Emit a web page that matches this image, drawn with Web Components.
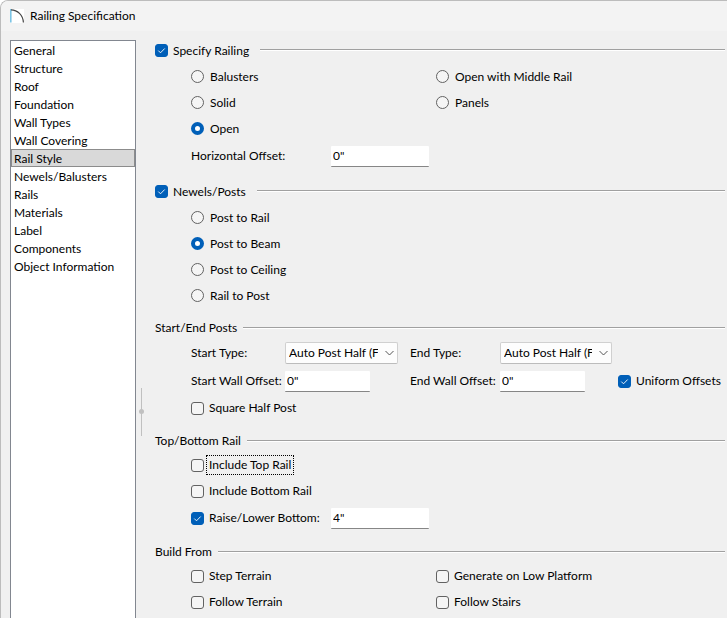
<!DOCTYPE html>
<html lang="en">
<head>
<meta charset="utf-8">
<title>Railing Specification</title>
<style>
html, body { margin: 0; height: 100%; }
body { font: 12px/18px Lato, "Open Sans", sans-serif; color: #000; background: #fff; overflow: hidden; }
</style>
</head>
<body>
<dialog-window heading="Railing Specification">
  <nav-list slot="nav" items="General|Structure|Roof|Foundation|Wall Types|Wall Covering|Rail Style|Newels/Balusters|Rails|Materials|Label|Components|Object Information" current="Rail Style"></nav-list>

  <option-group heading="Specify Railing" checkable>
    <radio-set label="Railing type" columns="2" options="Balusters|Open with Middle Rail|Solid|Panels|Open" selected="Open"></radio-set>
    <text-field label="Horizontal Offset:" value='0"'></text-field>
  </option-group>

  <option-group heading="Newels/Posts" checkable>
    <radio-set label="Post placement" columns="1" options="Post to Rail|Post to Beam|Post to Ceiling|Rail to Post" selected="Post to Beam"></radio-set>
  </option-group>

  <option-group heading="Start/End Posts">
    <field-row layout="posts">
      <select-field label="Start Type:" value="Auto Post Half (Flat)"></select-field>
      <select-field label="End Type:" value="Auto Post Half (Flat)" class="end"></select-field>
    </field-row>
    <field-row layout="posts">
      <text-field label="Start Wall Offset:" value='0"' class="compact start narrow"></text-field>
      <text-field label="End Wall Offset:" value='0"' class="compact end narrow"></text-field>
      <check-box label="Uniform Offsets" checked></check-box>
    </field-row>
    <check-box label="Square Half Post"></check-box>
  </option-group>

  <option-group heading="Top/Bottom Rail">
    <check-box label="Include Top Rail" focused></check-box>
    <check-box label="Include Bottom Rail"></check-box>
    <field-row layout="raise">
      <check-box label="Raise/Lower Bottom:" checked></check-box>
      <text-field name="Raise/Lower Bottom" value='4"' class="compact"></text-field>
    </field-row>
  </option-group>

  <option-group heading="Build From">
    <field-row layout="pair">
      <check-box label="Step Terrain"></check-box>
      <check-box label="Generate on Low Platform"></check-box>
    </field-row>
    <field-row layout="pair">
      <check-box label="Follow Terrain"></check-box>
      <check-box label="Follow Stairs"></check-box>
    </field-row>
  </option-group>
</dialog-window>

<script>
const esc = s => (s || '').replace(/&/g, '&amp;').replace(/"/g, '&quot;').replace(/</g, '&lt;');

class Base extends HTMLElement {
  connectedCallback() {
    if (!this.shadowRoot) this.attachShadow({ mode: 'open' }).innerHTML = this.render();
  }
  a(name) { return esc(this.getAttribute(name)); }
}

const toggleCss = `
  input { appearance: none; box-sizing: border-box; flex: none; width: 13px; height: 13px; margin: 0;
    border: 1px solid #626262; background: #f5f5f5; outline: none; }
  input[type=checkbox] { border-radius: 3px; }
  input[type=radio] { border-radius: 50%; }
  input[type=checkbox]:checked { border-color: #005fb8; background: #005fb8
    url("data:image/svg+xml,%3Csvg xmlns='http://www.w3.org/2000/svg' viewBox='0 0 11 11'%3E%3Cpath d='M2.3 5.6 4.5 7.8 8.7 3.5' fill='none' stroke='white' stroke-width='.9'/%3E%3C/svg%3E") center / 11px 11px; }
  input[type=radio]:checked { border: 4px solid #005fb8; background: #fff; }
`;

customElements.define('dialog-window', class extends Base {
  render() {
    return `<style>
      :host { display: flex; flex-direction: column; box-sizing: border-box; min-height: 100vh; background: #f0f0f0;
        border: solid #bcbcbc; border-width: 1px 0 0 1px; border-radius: 8px 0 0 0; }
      header { display: flex; align-items: center; gap: 6px; height: 30px; padding-left: 9px; background: #f3f3f3; border-radius: 7px 0 0 0; }
      h1 { margin: 0; font: inherit; }
      svg { display: block; }
      .body { flex: 1; display: flex; align-items: stretch; padding: 9px 2px 0 9px; }
      .split { width: 19px; position: relative; flex: none; }
      .split i { position: absolute; left: 5px; top: 348px; width: 1px; height: 48px; background: #c0c0c0; }
      .split i::after { content: ""; position: absolute; left: -2px; top: 21px; width: 5px; height: 5px; border-radius: 50%; background: #c0c0c0; }
      main { flex: 1; min-width: 0; display: flex; flex-direction: column; gap: 10px; }
    </style>
    <header>
      <svg width="14" height="14" viewBox="0 0 14 14" aria-hidden="true"><path d="M0 0h14v14H0z" fill="#fff"/><path d="M.8 0v13.5" stroke="#7cc4e4" stroke-width="1.6"/><path d="M1 .9C7.5 1 13 6 13.4 13.5" fill="none" stroke="#444" stroke-width="1.2"/></svg>
      <h1>${this.a('heading')}</h1>
    </header>
    <div class="body"><slot name="nav"></slot><div class="split"><i></i></div><main><slot></slot></main></div>`;
  }
});

customElements.define('nav-list', class extends Base {
  render() {
    const cur = this.getAttribute('current');
    const items = this.getAttribute('items').split('|').map(t =>
      `<button type="button"${t === cur ? ' aria-current="page"' : ''}>${esc(t)}</button>`).join('');
    return `<style>
      :host { display: block; box-sizing: border-box; flex: none; width: 126px; background: #fff; border: 1px solid #828790; border-bottom: 0; }
      nav { display: flex; flex-direction: column; }
      button { box-sizing: border-box; height: 18px; padding: 1px 2px 0; border: 1px solid transparent; background: none;
        font: inherit; line-height: 15px; color: inherit; text-align: left; white-space: nowrap; }
      [aria-current] { background: #d9d9d9; border-color: #8c8c8c; }
    </style><nav>${items}</nav>`;
  }
});

customElements.define('option-group', class extends Base {
  render() {
    const h = this.a('heading');
    const check = this.hasAttribute('checkable');
    return `<style>
      :host { display: block; }
      header { display: flex; align-items: center; height: 20px; gap: ${check ? 11 : 6}px; }
      h2 { margin: 0; font: inherit; }
      label { display: flex; align-items: center; gap: 5px; }
      span { padding-top: 2px; }
      ${toggleCss}
      hr { flex: 1; margin: 0; border: 0; height: 1px; background: #a0a0a0; border-bottom: 1px solid #fff; }
      .rows { padding: ${check ? 3 : 1}px 0 0 36px; }
    </style>
    <header><h2>${check ? `<label><input type="checkbox" checked><span>${h}</span></label>` : h}</h2><hr></header>
    <div class="rows"><slot></slot></div>`;
  }
});

customElements.define('radio-set', class extends Base {
  render() {
    const sel = this.getAttribute('selected');
    const opts = this.getAttribute('options').split('|').map(t =>
      `<label><input type="radio" name="choice"${t === sel ? ' checked' : ''}><span>${esc(t)}</span></label>`).join('');
    return `<style>
      :host { display: block; }
      div { display: grid; grid-template-columns: ${this.getAttribute('columns') === '2' ? '245px 1fr' : '1fr'}; grid-auto-rows: 26px; }
      label { display: flex; align-items: center; gap: 6px; white-space: nowrap; }
      span { padding-top: 2px; }
      ${toggleCss}
    </style><div role="radiogroup" aria-label="${this.a('label')}">${opts}</div>`;
  }
});

customElements.define('check-box', class extends Base {
  render() {
    return `<style>
      :host { display: flex; align-items: center; height: 26px; }
      label { display: flex; align-items: center; gap: 2px; white-space: nowrap; }
      span { padding: 0 2px; border: 1px solid transparent; }
      :host([focused]) span { border: 1px dotted #000; }
      ${toggleCss}
    </style><label><input type="checkbox"${this.hasAttribute('checked') ? ' checked' : ''}><span>${this.a('label')}</span></label>`;
  }
});

customElements.define('text-field', class extends Base {
  render() {
    const label = this.a('label');
    return `<style>
      :host { display: flex; align-items: center; height: 30px; --label: 140px; --control: 98px; }
      :host(.compact) { height: 28px; }
      :host(.narrow) { --control: 85px; }
      :host(.start) { --label: 94px; }
      :host(.end) { --label: 90px; }
      label { width: var(--label); flex: none; white-space: nowrap; }
      input { box-sizing: border-box; width: var(--control); height: 21px; padding: 0 2px; margin: 0; border: 0; border-bottom: 1px solid #868686;
        border-radius: 1px; background: #fff; font: inherit; color: inherit; outline: none; }
    </style>${label ? `<label for="f">${label}</label>` : ''}<input id="f" type="text" value="${this.a('value')}"${label ? '' : ` aria-label="${this.a('name')}"`}>`;
  }
});

customElements.define('select-field', class extends Base {
  render() {
    return `<style>
      :host { display: flex; align-items: center; --label: 94px; --control: 113px; }
      :host(.end) { --label: 90px; --control: 112px; }
      label { width: var(--label); flex: none; }
      .box { display: grid; width: var(--control); align-items: center; }
      select, svg { grid-area: 1 / 1; }
      select { appearance: none; box-sizing: border-box; width: 100%; height: 22px; padding: 0 19px 0 3px; margin: 0;
        border: 1px solid #d0d0d0; border-bottom-color: #bcbcbc; border-radius: 2px; background: #fdfdfd; font: inherit; color: inherit; outline: none; text-overflow: clip; }
      svg { justify-self: end; margin-right: 4px; pointer-events: none; }
    </style><label for="s">${this.a('label')}</label>
    <div class="box"><select id="s"><option>${this.a('value')}</option></select>
    <svg width="9" height="6" viewBox="0 0 9 6" aria-hidden="true"><path d="M.5 1 4.5 5 8.5 1" fill="none" stroke="#555"/></svg></div>`;
  }
});

customElements.define('field-row', class extends Base {
  render() {
    const cols = { posts: '219px 208px 1fr', raise: '140px 1fr', pair: '245px 1fr' }[this.getAttribute('layout')];
    return `<style>
      :host { display: grid; grid-template-columns: ${cols}; align-items: center; min-height: 26px; }
      :host([layout=posts]) { min-height: 28px; }
    </style><slot></slot>`;
  }
});
</script>
</body>
</html>
